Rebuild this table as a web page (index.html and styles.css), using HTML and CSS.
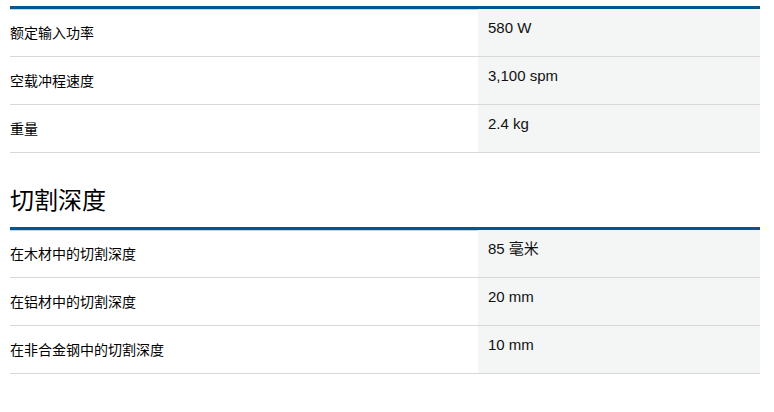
FILE: index.html
```html
<!DOCTYPE html>
<html lang="zh">
<head>
<meta charset="utf-8">
<link rel="stylesheet" href="styles.css">
</head>
<body>
<div class="page">
  <div class="spec-table">
    <div class="row"><div class="label">额定输入功率</div><div class="value">580 W</div></div>
    <div class="row"><div class="label">空载冲程速度</div><div class="value">3,100 spm</div></div>
    <div class="row"><div class="label">重量</div><div class="value">2.4 kg</div></div>
  </div>
  <h2 class="section-title">切割深度</h2>
  <div class="spec-table">
    <div class="row"><div class="label">在木材中的切割深度</div><div class="value">85 毫米</div></div>
    <div class="row"><div class="label">在铝材中的切割深度</div><div class="value">20 mm</div></div>
    <div class="row"><div class="label">在非合金钢中的切割深度</div><div class="value">10 mm</div></div>
  </div>
</div>
</body>
</html>
```
FILE: styles.css
```css
html, body {
  margin: 0;
  padding: 0;
  background: #ffffff;
}
.page {
  width: 750px;
  padding: 6px 0 0 10px;
  color: #000000;
  font-family: "Noto Sans CJK SC", "Liberation Sans", sans-serif;
}
.spec-table {
  border-top: 3px solid #005691;
  box-shadow: inset 0 1px 0 #c8d6e2;
}
.row {
  display: grid;
  grid-template-columns: 468px 282px;
  height: 48px;
  box-sizing: border-box;
  border-bottom: 1px solid #d8d8d8;
}
.label {
  display: flex;
  align-items: center;
  font-size: 14px;
  line-height: 20px;
  padding-bottom: 1px;
}
.value {
  background: #f4f5f5;
  padding: 9px 10px 0 10px;
  font-family: "Liberation Sans", "Noto Sans CJK SC", sans-serif;
  font-size: 15px;
  line-height: 20px;
  color: #111111;
}
.section-title {
  margin: 30px 0 12px 0;
  font-size: 24px;
  line-height: 32px;
  font-weight: 400;
  font-family: "Noto Sans CJK SC", sans-serif;
}
```
